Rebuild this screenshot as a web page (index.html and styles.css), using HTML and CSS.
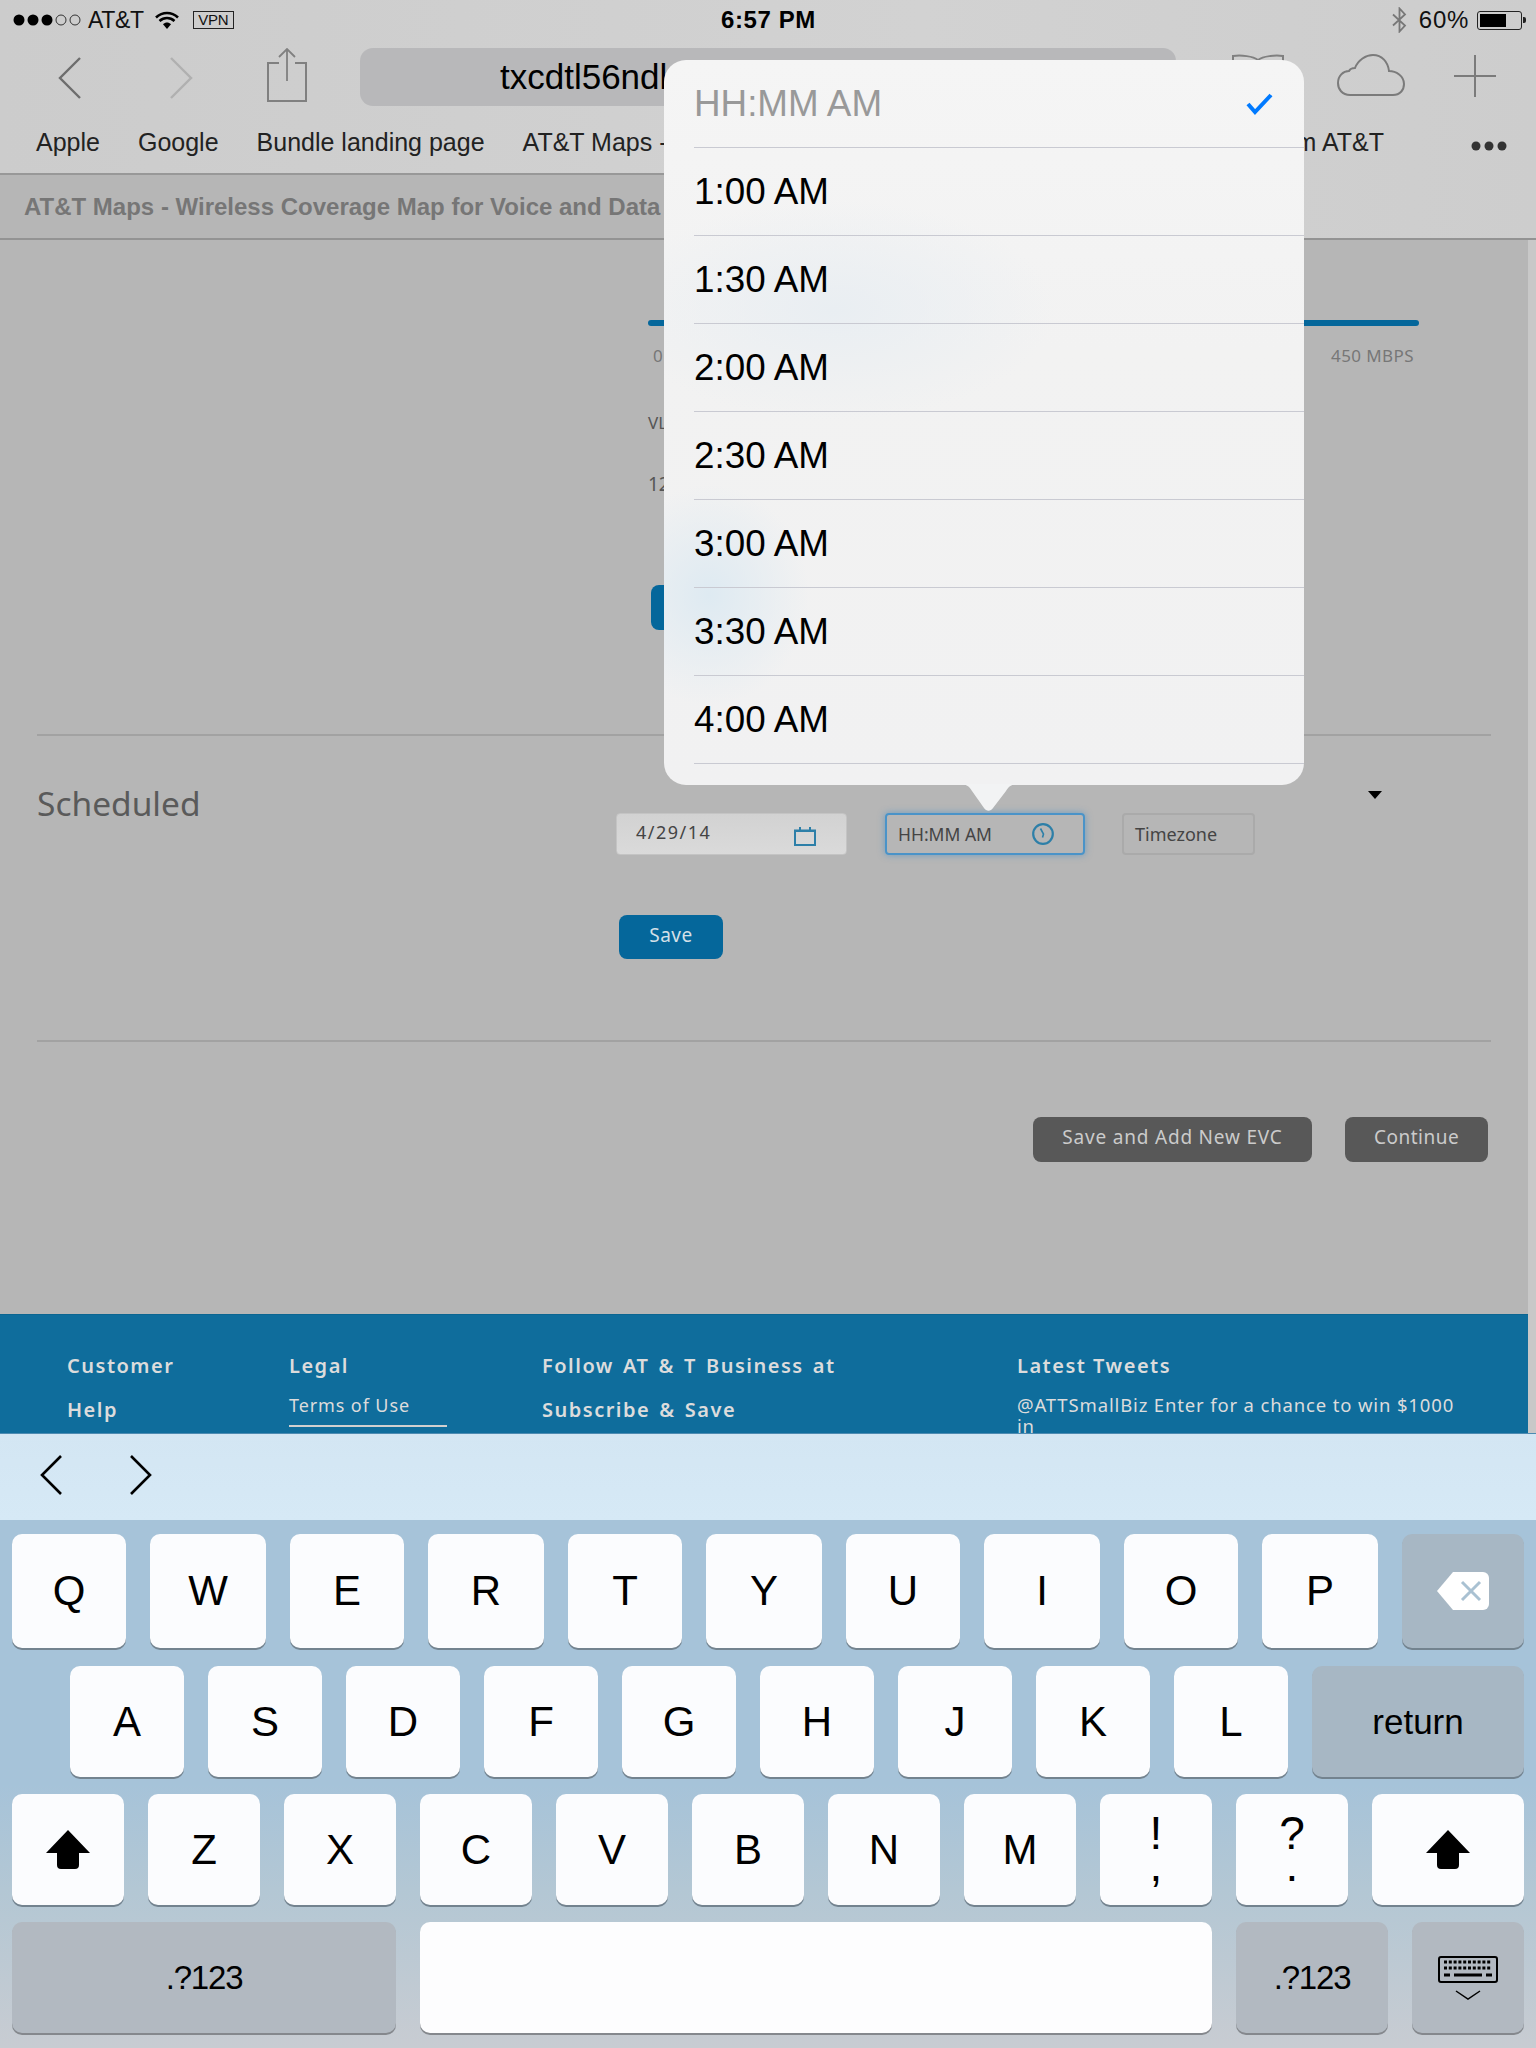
FILE: index.html
```html
<!DOCTYPE html>
<html lang="en">
<head>
<meta charset="utf-8">
<title>Scheduled</title>
<link rel="stylesheet" href="styles.css">
</head>
<body>
<div class="screen">
  <header class="chrome">
    <div class="status">
      <div class="status-left">
        <svg class="signal" width="70" height="12" viewBox="0 0 70 12"><circle cx="6" cy="6" r="5.5" fill="#000"/><circle cx="20" cy="6" r="5.5" fill="#000"/><circle cx="34" cy="6" r="5.5" fill="#000"/><circle cx="48" cy="6" r="5" fill="none" stroke="#333"/><circle cx="62" cy="6" r="5" fill="none" stroke="#333"/></svg>
        <span class="carrier">AT&amp;T</span>
        <svg class="wifi" width="24" height="18" viewBox="0 0 24 18"><path d="M1 6.500C7.500.5 16.500.5 23 6.500M4.500 10C9 6 15 6 19.500 10" fill="none" stroke="#000" stroke-width="2.600"/><path d="M8 13.200c2.500-2.200 5.500-2.200 8 0L12 18z" fill="#000"/></svg>
        <span class="vpn">VPN</span>
      </div>
      <div class="clock">6:57 PM</div>
      <div class="status-right">
        <svg class="bt" width="17" height="26" viewBox="0 0 17 26"><path d="M2 7.500 14 18.500 8.500 24.500V1.500L14 7.500 2 18.500" fill="none" stroke="#777" stroke-width="1.800"/></svg>
        <span class="pct">60%</span>
        <span class="battery"><span class="battery-fill"></span></span>
      </div>
    </div>
    <div class="toolbar">
      <svg class="tool-back" width="24" height="42" viewBox="0 0 24 42"><path d="M22 1 2 21l20 20" fill="none" stroke="#6d6d6d" stroke-width="2.400"/></svg>
      <svg class="tool-forward" width="24" height="42" viewBox="0 0 24 42"><path d="M2 1l20 20L2 41" fill="none" stroke="#b0b0b0" stroke-width="2.400"/></svg>
      <svg class="tool-share" width="40" height="54" viewBox="0 0 40 54"><path d="M12 15H1v38h38V15H28" fill="none" stroke="#808080" stroke-width="2"/><path d="M20 1v32M12 9l8-8 8 8" fill="none" stroke="#808080" stroke-width="1.800"/></svg>
      <div class="url">txcdtl56ndl</div>
      <svg class="tool-book" width="54" height="42" viewBox="0 0 54 42"><path d="M27 6C22 2 10 1 2 2v38c8-1 20 0 25 3 5-3 17-4 25-3V2c-8-1-20 0-25 4zM27 6v36" fill="none" stroke="#808080" stroke-width="2"/></svg>
      <svg class="tool-cloud" width="68" height="42" viewBox="0 0 68 42"><path d="M13 41C5 41 1 35 1 29c0-7 5-12 11-12 1-2 3-3 6-3 3-8 11-13 18-13 9 0 15 7 16 16 7 0 15 5 15 13 0 6-4 11-11 11z" fill="none" stroke="#7b7b7b" stroke-width="2"/></svg>
      <svg class="tool-plus" width="42" height="42" viewBox="0 0 42 42"><path d="M21 0v42M0 21h42" fill="none" stroke="#7b7b7b" stroke-width="2"/></svg>
    </div>
    <nav class="bookmarks">
      <span>Apple</span>
      <span>Google</span>
      <span>Bundle landing page</span>
      <span>AT&amp;T Maps - Wireless</span>
      <span class="bookmark-end">from AT&amp;T</span>
      <svg class="more" width="36" height="10" viewBox="0 0 36 10"><circle cx="5" cy="5" r="4.500" fill="#333"/><circle cx="18" cy="5" r="4.500" fill="#333"/><circle cx="31" cy="5" r="4.500" fill="#333"/></svg>
    </nav>
    <div class="tabs"><div class="tab">AT&amp;T Maps - Wireless Coverage Map for Voice and Data</div></div>
  </header>

  <main class="page">
    <section class="rate">
      <div class="bar"></div>
      <div class="scale"><span>0</span><span>450 MBPS</span></div>
      <div class="vlan">VLAN</div>
      <div class="vlan-value">12</div>
      <div class="rate-btn"></div>
    </section>
    <hr class="rule rule-one">
    <section class="schedule">
      <h2 class="schedule-title">Scheduled</h2>
      <div class="schedule-body">
        <div class="fields">
          <div class="field field-date"><span class="date-text">4/29/14</span>
            <svg width="22" height="19" viewBox="0 0 22 19"><path d="M1 3.500h20V18H1z" fill="none" stroke="#2d7fa8" stroke-width="2"/><path d="M1 3h20v2H1zM5 0h2v4H5zM15 0h2v4h-2z" fill="#2d7fa8"/></svg>
          </div>
          <div class="field field-time"><span>HH:MM AM</span>
            <svg width="22" height="22" viewBox="0 0 22 22"><circle cx="11" cy="11" r="9.800" fill="none" stroke="#2d7fa8" stroke-width="2.200"/><path d="M8.500 5.500 11.500 11l-1 3.500" fill="none" stroke="#2d7fa8" stroke-width="1.600"/></svg>
          </div>
          <div class="field field-zone">Timezone</div>
          <svg class="caret" width="14" height="8" viewBox="0 0 14 8"><path d="M0 0h14L7 8z" fill="#000"/></svg>
        </div>
        <div class="save">Save</div>
      </div>
    </section>
    <hr class="rule rule-two">
    <div class="actions">
      <div class="action action-add">Save and Add New EVC</div>
      <div class="action action-continue">Continue</div>
    </div>
  </main>

  <footer class="footer">
    <div class="foot-col"><h3>Customer</h3><h3>Help</h3></div>
    <div class="foot-col"><h3>Legal</h3><a class="foot-link">Terms of Use</a></div>
    <div class="foot-col foot-follow"><h3>Follow AT &amp; T Business at</h3><h3>Subscribe &amp; Save</h3></div>
    <div class="foot-col"><h3>Latest Tweets</h3><p class="tweet">@ATTSmallBiz Enter for a chance to win $1000<br>in</p></div>
  </footer>

  <div class="accessory">
    <svg width="24" height="40" viewBox="0 0 24 40"><path d="M22 1 3 20l19 19" fill="none" stroke="#000" stroke-width="2.600"/></svg>
    <svg width="24" height="40" viewBox="0 0 24 40"><path d="M2 1l19 19L2 39" fill="none" stroke="#000" stroke-width="2.600"/></svg>
  </div>

  <div class="keyboard">
    <div class="row row-one">
      <div class="key">Q</div><div class="key wide">W</div><div class="key">E</div><div class="key wide">R</div><div class="key">T</div><div class="key wide">Y</div><div class="key">U</div><div class="key wide">I</div><div class="key">O</div><div class="key wide">P</div>
      <div class="key dark back">
        <svg width="54" height="38" viewBox="0 0 54 38"><path d="M17 0h30a6 6 0 0 1 6 6v26a6 6 0 0 1-6 6H17L1 19z" fill="#fff"/><path d="M26 10l18 18M44 10 26 28" stroke="#a9c1d2" stroke-width="3"/></svg>
      </div>
    </div>
    <div class="row row-two">
      <div class="key">A</div><div class="key">S</div><div class="key">D</div><div class="key">F</div><div class="key">G</div><div class="key">H</div><div class="key">J</div><div class="key">K</div><div class="key">L</div>
      <div class="key dark ret">return</div>
    </div>
    <div class="row">
      <div class="key short">
        <svg width="44" height="39" viewBox="0 0 44 39"><path d="M22 0 44 23H33v12a4 4 0 0 1-4 4H15a4 4 0 0 1-4-4V23H0z" fill="#000"/></svg>
      </div>
      <div class="key short">Z</div><div class="key short">X</div><div class="key short">C</div><div class="key short">V</div><div class="key short">B</div><div class="key short">N</div><div class="key short">M</div>
      <div class="key short pair">!
,</div>
      <div class="key short pair">?
.</div>
      <div class="key short shift-right">
        <svg width="44" height="39" viewBox="0 0 44 39"><path d="M22 0 44 23H33v12a4 4 0 0 1-4 4H15a4 4 0 0 1-4-4V23H0z" fill="#000"/></svg>
      </div>
    </div>
    <div class="row">
      <div class="key short dark num-wide">.?123</div>
      <div class="key short space"></div>
      <div class="key short dark num">.?123</div>
      <div class="key short dark hide">
        <svg width="60" height="44" viewBox="0 0 60 44"><rect x="1" y="1" width="58" height="25" rx="2" fill="none" stroke="#000" stroke-width="2"/><path d="M6 6h48M6 12h48" stroke="#000" stroke-width="3" stroke-dasharray="3 1.800"/><path d="M6 19h6M16 19h28M48 19h6" stroke="#000" stroke-width="3"/><path d="M18 35l12 8 12-8" fill="none" stroke="#000" stroke-width="1.500"/></svg>
      </div>
    </div>
  </div>

  <div class="popover">
    <ul class="options">
      <li class="option option-current">HH:MM AM
        <svg width="28" height="22" viewBox="0 0 28 22"><path d="M2 11l7 8L25 2" fill="none" stroke="#007aff" stroke-width="4"/></svg>
      </li>
      <li class="option">1:00 AM</li>
      <li class="option">1:30 AM</li>
      <li class="option">2:00 AM</li>
      <li class="option">2:30 AM</li>
      <li class="option">3:00 AM</li>
      <li class="option">3:30 AM</li>
      <li class="option">4:00 AM</li>
    </ul>
    <svg class="pointer" width="58" height="27" viewBox="0 0 58 27"><path d="M0 0c6 0 9 2 12 7l12 17c2.500 3.500 6.500 3.500 9 0L46 7c3-5 6-7 12-7z" fill="#f2f3f4"/></svg>
  </div>
</div>
</body>
</html>
```

FILE: styles.css
```css
* { box-sizing: border-box; }
html, body { margin: 0; padding: 0; }
body { font-family: "Liberation Sans", Arial, sans-serif; background: #b6b6b6; }

.screen { position: relative; width: 1536px; height: 2048px; overflow: hidden; display: flex; flex-direction: column; }

/* browser chrome */
.chrome { height: 240px; flex: none; background: linear-gradient(90deg, #cccccc, #d2d2d2 60%, #cdcdcd); color: #111; }
.status { height: 40px; display: flex; align-items: center; padding: 0 14px 0 13px; }
.status-left, .status-right { flex: 1; display: flex; align-items: center; }
.status-right { justify-content: flex-end; }
.signal { margin-right: 5px; }
.carrier { font-size: 23px; letter-spacing: -0.3px; }
.wifi { margin-left: 11px; }
.vpn { margin-left: 14px; width: 41px; height: 18px; border: 1px solid #222; font-size: 15px; line-height: 16px; text-align: center; letter-spacing: -0.2px; }
.clock { font-size: 24px; font-weight: 700; color: #000; letter-spacing: 0.6px; margin-left: 2px; }
.bt { margin-right: 11px; }
.pct { font-size: 24px; letter-spacing: 0.7px; margin-right: 8px; }
.battery { position: relative; width: 45px; height: 19px; border: 1.500px solid #222; border-radius: 3px; padding: 2px; }
.battery::after { content: ""; position: absolute; right: -5px; top: 5px; width: 3px; height: 6px; background: #222; border-radius: 0 2px 2px 0; }
.battery-fill { display: block; width: 26px; height: 100%; background: #000; }

.toolbar { height: 76px; display: flex; align-items: flex-start; position: relative; }
.tool-back { margin: 17px 0 0 58px; }
.tool-forward { margin: 17px 0 0 87px; }
.tool-share { margin: 8px 0 0 74px; }
.url { width: 816px; height: 58px; margin: 8px 0 0 53px; padding-left: 140px; background: #b8b8ba; border-radius: 13px; font-size: 35px; line-height: 58px; color: #000; }
.tool-book { margin: 14px 0 0 55px; }
.tool-cloud { margin: 14px 0 0 52px; }
.tool-plus { margin: 15px 0 0 49px; }

.bookmarks { height: 57px; display: flex; align-items: center; gap: 38px; padding: 0 29px 4px 36px; font-size: 25px; color: #222; white-space: nowrap; position: relative; }
.bookmark-end { margin-left: auto; margin-right: 49px; }
.more { margin-top: 6px; }

.tabs { height: 67px; border-bottom: 2px solid #939393; }
.tab { width: 900px; height: 65px; background: #b6b6b6; border-top: 2px solid #989898; padding-left: 24px; font-size: 24px; font-weight: 700; line-height: 63px; color: #767676; white-space: nowrap; }

/* page content */
.page { flex: none; height: 1074px; width: 1528px; background: #b6b6b6; padding-left: 37px; color: #555; font-family: "Noto Sans", "Open Sans", sans-serif; box-shadow: 8px 0 0 #c8c8c8; }
.rate { margin-left: 611px; width: 771px; padding-top: 80px; }
.bar { height: 6px; background: #05679b; border-radius: 3px; }
.scale { display: flex; justify-content: space-between; padding: 18px 5px 0 5px; font-size: 17px; line-height: 24px; color: #777; letter-spacing: 0.4px; }
.vlan { margin-top: 43px; font-size: 17px; line-height: 24px; }
.vlan-value { margin-top: 37px; font-size: 19px; line-height: 24px; }
.rate-btn { margin: 89px 0 0 3px; width: 104px; height: 45px; border-radius: 8px; background: #05679b; }
.rule { margin: 0; border: 0; height: 2px; width: 1454px; background: #a2a2a2; }
.rule-one { margin-top: 104px; }
.schedule { display: flex; height: 304px; }
.schedule-title { margin: 45px 0 0; width: 580px; font-size: 33.500px; line-height: 44px; font-weight: 400; color: #5a5a5a; flex: none; }
.schedule-body { flex: 1; padding-top: 77px; }
.fields { position: relative; display: flex; align-items: center; }
.field { height: 42px; border-radius: 4px; display: flex; align-items: center; justify-content: space-between; font-size: 18px; color: #444; }
.field-date { width: 231px; margin-left: -1px; background: linear-gradient(#d2d2d2, #dadada); border: 1px solid #c4c4c4; padding: 0 30px 0 19px; }
.date-text { margin-top: -4px; letter-spacing: 1.500px; }
.field-date svg { margin-top: 4px; }
.field-time { width: 200px; margin-left: 38px; border: 2px solid #4a93c8; box-shadow: 0 0 7px rgba(50, 135, 200, 0.55); padding: 0 29px 0 11px; font-size: 17.500px; }
.field-zone { width: 133px; margin-left: 37px; border: 2px solid #aaaaaa; padding-left: 11px; justify-content: flex-start; }
.caret { position: absolute; left: 751px; top: -22px; }
.save { margin: 60px 0 0 2px; width: 104px; height: 44px; border-radius: 8px; background: #05679b; color: #d4e0e8; font-size: 19px; line-height: 40px; text-align: center; letter-spacing: 0.5px; }
.actions { display: flex; gap: 33px; margin: 75px 0 0 996px; }
.action { height: 45px; border-radius: 8px; background: #585858; color: #cbcbcb; font-size: 19px; line-height: 41px; text-align: center; letter-spacing: 0.8px; }
.action-add { width: 279px; }
.action-continue { width: 143px; letter-spacing: 0.5px; }

/* footer */
.footer { flex: none; height: 119px; width: 1528px; background: #0f6d9c; border-top: 1px solid #0b6591; overflow: hidden; display: grid; grid-template-columns: 222px 253px 475px 1fr; padding: 37px 0 0 67px; color: #dcdcdc; font-family: "Noto Sans", "Open Sans", sans-serif; box-shadow: 8px 0 0 #c8c8c8; }
.foot-col h3 { margin: 0 0 16px; font-size: 20px; line-height: 28px; font-weight: 600; letter-spacing: 1.500px; white-space: nowrap; }
.foot-follow h3 { word-spacing: 2.400px; }
.foot-link { display: block; width: 158px; margin-top: -3px; padding-bottom: 8px; border-bottom: 2px solid #d0d0d0; font-size: 18px; line-height: 24px; letter-spacing: 0.900px; }
.tweet { margin: -2px 0 0; font-size: 18.500px; line-height: 21px; letter-spacing: 0.850px; white-space: nowrap; }

/* keyboard */
.accessory { flex: none; height: 87px; background: linear-gradient(#d3e6f3, #d6e9f6); display: flex; align-items: center; gap: 66px; padding: 0 0 4px 39px; border-top: 1px solid #4d8bb2; }
.keyboard { flex: 1; display: flex; flex-direction: column; gap: 17px; padding: 14px 12px 15px; background: linear-gradient(#a6c3d9 0%, #a6c3d9 50%, #b3c7d4 70%, #c8ccd2 100%); }
.row { display: flex; gap: 24px; height: 111px; }
.row-one { height: 114px; margin-bottom: 1px; }
.row-two { padding-left: 58px; }
.key { width: 114px; flex: none; display: flex; align-items: center; justify-content: center; border-radius: 10px; background: #fbfcfe; box-shadow: 0 2px 0 #73838f; font-size: 42px; color: #000; }
.wide { width: 116px; }
.short { width: 112px; }
.dark { background: #a7b7c4; }
.back { width: 122px; }
.ret { width: 212px; font-size: 35px; }
.pair { font-size: 46px; line-height: 32px; padding-bottom: 2px; white-space: pre-line; text-align: center; }
.shift-right { width: 152px; }
.num-wide { width: 384px; background: #b2b9c1; font-size: 33px; letter-spacing: -1.200px; box-shadow: 0 2px 0 #85888d; }
.space { width: 792px; background: #fdfdfe; box-shadow: 0 2px 0 #85888d; }
.num { width: 152px; background: #b2b9c1; font-size: 33px; letter-spacing: -1.200px; box-shadow: 0 2px 0 #85888d; }
.hide { background: #b2b9c1; box-shadow: 0 2px 0 #85888d; }

/* popover */
.popover { position: absolute; left: 664px; top: 60px; width: 640px; height: 725px; border-radius: 22px; background: radial-gradient(ellipse 100px 110px at 45px 535px, #deeaf2, rgba(222, 234, 242, 0) 100%), radial-gradient(ellipse 220px 110px at 170px 250px, #e9eef2, rgba(233, 238, 242, 0) 100%), linear-gradient(#f5f5f5, #f2f2f2 40%, #f1f1f2); }
.options { margin: 0; padding: 0 0 0 30px; list-style: none; height: 703px; }
.option { height: 88px; display: flex; align-items: center; justify-content: space-between; border-bottom: 1px solid #c9cad2; font-size: 36.800px; color: #000; padding-right: 30px; }
.option-current { color: #999; }
.pointer { position: absolute; left: 296px; top: 725px; display: block; margin-top: -1px; }
```
